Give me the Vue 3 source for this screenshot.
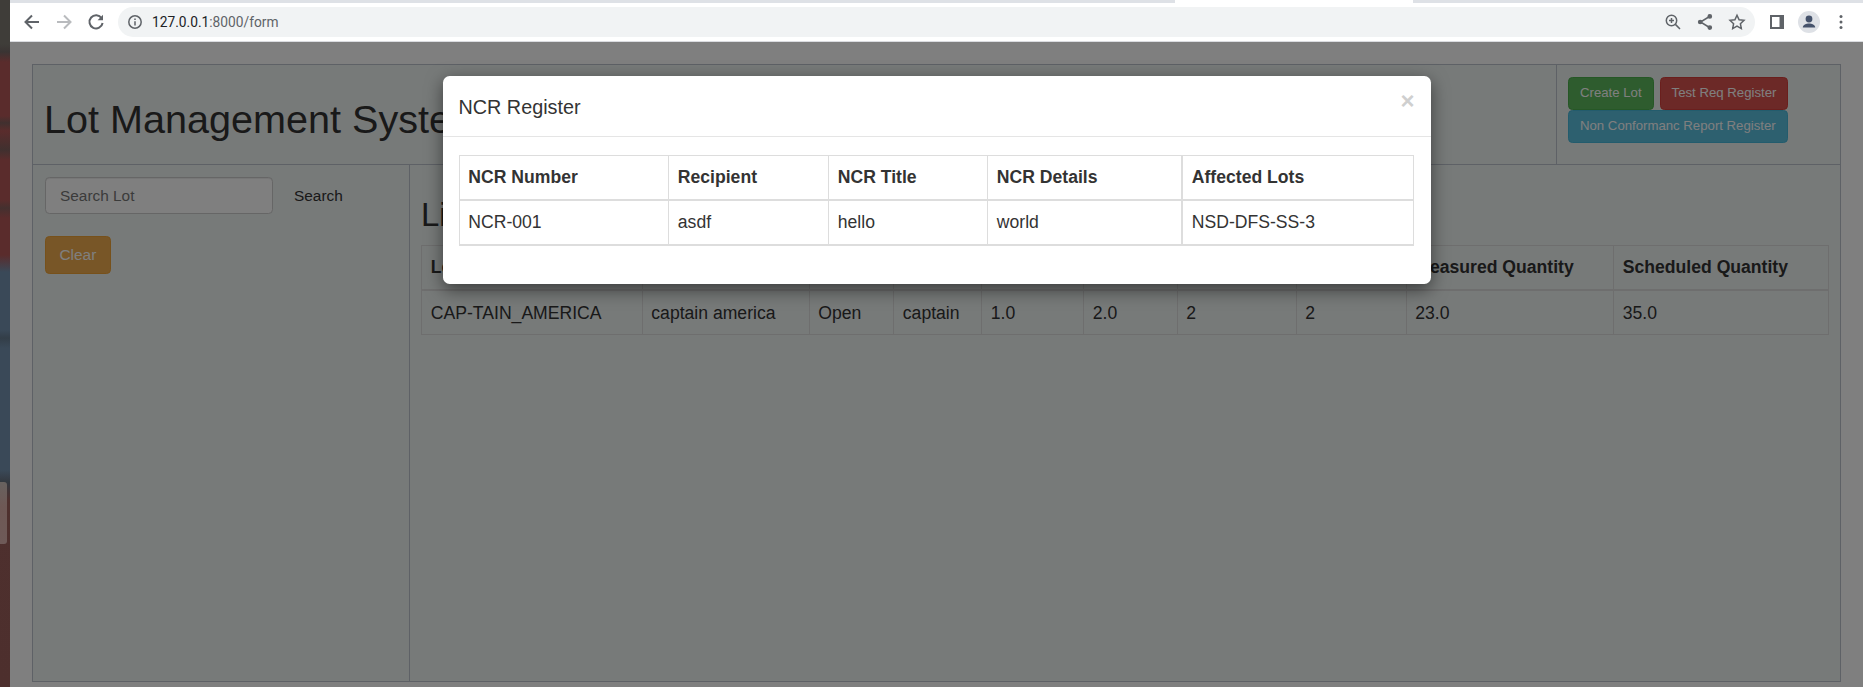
<script setup>
const lotColumns = [
  { label: 'Lot Number', value: 'CAP-TAIN_AMERICA', width: 220.5 },
  { label: 'Lot Title', value: 'captain america', width: 167 },
  { label: 'Status', value: 'Open', width: 84.5 },
  { label: 'Owner', value: 'captain', width: 88 },
  { label: 'Spec Min', value: '1.0', width: 102 },
  { label: 'Spec Max', value: '2.0', width: 93.5 },
  { label: 'Test Count', value: '2', width: 119 },
  { label: 'Reqs', value: '2', width: 110 },
  { label: 'Measured Quantity', value: '23.0', width: 207.5 },
  { label: 'Scheduled Quantity', value: '35.0', width: 215 }
]

const ncrColumns = [
  { label: 'NCR Number', value: 'NCR-001', width: 209.5 },
  { label: 'Recipient', value: 'asdf', width: 160 },
  { label: 'NCR Title', value: 'hello', width: 159 },
  { label: 'NCR Details', value: 'world', width: 194.5 },
  { label: 'Affected Lots', value: 'NSD-DFS-SS-3', width: 231 }
]
</script>

<template>
  <div class="screen">
    <div class="wallpaper">
      <div class="dock-tile"></div>
    </div>

    <div class="browser">
      <div class="tabstrip">
        <div class="active-tab"></div>
      </div>

      <div class="toolbar">
        <span class="tool first">
          <svg width="20" height="20" viewBox="0 0 20 20" fill="none" stroke="#5f6368" stroke-width="2">
            <path d="M17 10H4M10 3.5 3.5 10l6.5 6.5" />
          </svg>
        </span>
        <span class="tool">
          <svg width="20" height="20" viewBox="0 0 20 20" fill="none" stroke="#b9bbbe" stroke-width="2">
            <path d="M3 10h13M10 3.5l6.5 6.5-6.5 6.5" />
          </svg>
        </span>
        <span class="tool">
          <svg width="20" height="20" viewBox="0 0 20 20" fill="none" stroke="#5f6368" stroke-width="2">
            <path d="M15.6 6.2A6.6 6.6 0 1 0 16.6 11" />
            <path d="M17 2.8v5.4h-5.4z" fill="#5f6368" stroke="none" />
          </svg>
        </span>

        <div class="omnibox">
          <span class="tool">
            <svg width="16" height="16" viewBox="0 0 16 16" fill="none" stroke="#5f6368" stroke-width="1.5">
              <circle cx="8" cy="8" r="6.2" />
              <path d="M8 7.2v4.2M8 4.4v1.6" />
            </svg>
          </span>
          <span class="url"><span class="host">127.0.0.1</span>:8000/form</span>
          <span class="tool push">
            <svg width="18" height="18" viewBox="0 0 18 18" fill="none" stroke="#5f6368" stroke-width="1.5">
              <circle cx="7.5" cy="7.5" r="5.2" />
              <path d="M11.4 11.4 16 16M7.5 5v5M5 7.5h5" />
            </svg>
          </span>
          <span class="tool">
            <svg width="18" height="18" viewBox="0 0 18 18" fill="#5f6368" stroke="#5f6368" stroke-width="1.5">
              <path d="M13.5 3.5 4.5 9l9 5.5" fill="none" />
              <circle cx="13.8" cy="3.4" r="1.6" />
              <circle cx="4.2" cy="9" r="1.6" />
              <circle cx="13.8" cy="14.6" r="1.6" />
            </svg>
          </span>
          <span class="tool">
            <svg width="18" height="18" viewBox="0 0 18 18" fill="none" stroke="#5f6368" stroke-width="1.5">
              <path d="M9 2.2l2.1 4.5 4.9.6-3.6 3.4.9 4.9L9 13.2l-4.3 2.4.9-4.9L2 7.3l4.9-.6z" />
            </svg>
          </span>
        </div>

        <span class="tool">
          <svg width="16" height="16" viewBox="0 0 16 16">
            <path d="M1 1h14v14H1z" fill="#5f6368" />
            <path d="M3 3h7.5v10H3z" fill="#fff" />
          </svg>
        </span>
        <span class="tool">
          <svg width="22" height="22" viewBox="0 0 22 22">
            <circle cx="11" cy="11" r="11" fill="#dee1e6" />
            <circle cx="11" cy="8" r="3.4" fill="#45526b" />
            <path d="M4.8 16.5c0-2.8 3.6-4 6.2-4s6.2 1.2 6.2 4z" fill="#45526b" />
          </svg>
        </span>
        <span class="tool">
          <svg width="16" height="16" viewBox="0 0 16 16" fill="#5f6368">
            <circle cx="8" cy="2.5" r="1.5" />
            <circle cx="8" cy="8" r="1.5" />
            <circle cx="8" cy="13.5" r="1.5" />
          </svg>
        </span>
      </div>

      <div class="page">
        <div class="frame">
          <div class="top-row">
            <div class="title-cell">
              <h1>Lot Management System</h1>
            </div>
            <div class="action-cell">
              <button class="btn small success">Create Lot</button>
              <button class="btn small danger">Test Req Register</button>
              <button class="btn small info">Non Conformanc Report Register</button>
            </div>
          </div>

          <div class="bottom-row">
            <aside class="sidebar">
              <div class="search-row">
                <input class="search-input" placeholder="Search Lot" />
                <button class="btn link">Search</button>
              </div>
              <button class="btn warning">Clear</button>
            </aside>

            <main class="content">
              <h2>List of Lots</h2>
              <table class="lot-table">
                <thead>
                  <tr>
                    <th v-for="col in lotColumns" :key="col.label" :style="{ width: col.width + 'px' }">{{ col.label }}</th>
                  </tr>
                </thead>
                <tbody>
                  <tr>
                    <td v-for="col in lotColumns" :key="col.label">{{ col.value }}</td>
                  </tr>
                </tbody>
              </table>
            </main>
          </div>
        </div>

        <div class="backdrop"></div>

        <div class="modal-wrap">
          <div class="modal">
            <div class="modal-header">
              <span class="modal-title">NCR Register</span>
              <span class="close">×</span>
            </div>
            <div class="modal-body">
              <table class="ncr-table">
                <thead>
                  <tr>
                    <th v-for="col in ncrColumns" :key="col.label" :style="{ width: col.width + 'px' }">{{ col.label }}</th>
                  </tr>
                </thead>
                <tbody>
                  <tr>
                    <td v-for="col in ncrColumns" :key="col.label">{{ col.value }}</td>
                  </tr>
                </tbody>
              </table>
            </div>
          </div>
        </div>
      </div>
    </div>
  </div>
</template>

<style>
html,
body {
  margin: 0;
  overflow: hidden;
}
</style>

<style scoped>
.screen {
  display: flex;
  width: 1863px;
  height: 687px;
  overflow: hidden;
  font-family: "Liberation Sans", Arial, sans-serif;
  color: #333;
}

.wallpaper {
  position: relative;
  width: 10px;
  flex-shrink: 0;
  background: linear-gradient(
    180deg,
    #3f3d39 0,
    #3f3d39 44px,
    #3a3433 52px,
    #5a2c2c 62px,
    #5a2c2c 116px,
    #40302f 123px,
    #5a2c2c 131px,
    #40302f 150px,
    #5a2c2c 160px,
    #5a2c2c 200px,
    #44302f 208px,
    #5a2c2c 218px,
    #5a2c2c 255px,
    #3a4958 272px,
    #3a4958 330px,
    #333e48 338px,
    #3a4958 348px,
    #3a4958 470px,
    #33383f 482px,
    #4e302e 500px,
    #4d2f2d 687px
  );
}

.dock-tile {
  position: absolute;
  left: 0;
  top: 482px;
  width: 7px;
  height: 62px;
  border-radius: 0 3px 3px 0;
  background: linear-gradient(180deg, #68625f, #6e5855 40%, #6e5a58);
}

.browser {
  flex: 1;
  display: flex;
  flex-direction: column;
  min-width: 0;
}

.tabstrip {
  height: 3px;
  background: #dee1e6;
}

.active-tab {
  width: 238px;
  height: 3px;
  margin-left: 1165px;
  background: #fff;
}

.toolbar {
  display: flex;
  align-items: center;
  height: 39px;
  padding: 0 6px;
  box-sizing: border-box;
  background: #fff;
  border-bottom: 1px solid #dadce0;
}

.tool {
  display: flex;
  align-items: center;
  justify-content: center;
  width: 32px;
  height: 30px;
  flex-shrink: 0;
}

.omnibox {
  flex: 1;
  display: flex;
  align-items: center;
  height: 30px;
  margin: 0 6px;
  padding: 0 2px 0 1px;
  border-radius: 15px;
  background: #f1f3f4;
}

.url {
  margin-left: 1px;
  font-family: Roboto, "Liberation Sans", sans-serif;
  font-size: 13.75px;
  color: #5f6368;
}

.host {
  color: #202124;
}

.push {
  margin-left: auto;
}

.page {
  position: relative;
  flex: 1;
  padding: 22px 22px 5px;
  background: #fff;
  display: flex;
  flex-direction: column;
  min-height: 0;
}

.frame {
  flex: 1;
  display: flex;
  flex-direction: column;
  border: 1px solid #bcc3cc;
  background: #eef4f2;
  min-height: 0;
}

.top-row {
  display: flex;
  height: 99px;
  flex-shrink: 0;
  border-bottom: 1px solid #bcc3cc;
}

.title-cell {
  flex: 1;
  display: flex;
  align-items: center;
  padding: 10px 11px 0;
}

h1 {
  margin: 0;
  font-size: 39.6px;
  font-weight: 500;
  line-height: 1.1;
  white-space: nowrap;
}

.action-cell {
  width: 284px;
  box-sizing: border-box;
  padding: 12px 0 0 11px;
  border-left: 1px solid #bcc3cc;
}

.btn {
  display: inline-block;
  box-sizing: border-box;
  border: 1px solid transparent;
  border-radius: 4.4px;
  font-family: inherit;
  font-size: 15.4px;
  height: 37px;
  padding: 0 13px;
  color: #fff;
  white-space: nowrap;
  vertical-align: top;
}

.btn.small {
  font-size: 13.2px;
  height: 33px;
  padding: 0 11px 2px;
}

.success {
  background: #5cb85c;
  border-color: #4cae4c;
  margin-right: 6px;
}

.danger {
  background: #d9534f;
  border-color: #d43f3a;
}

.info {
  background: #5bc0de;
  border-color: #46b8da;
}

.warning {
  background: #f0ad4e;
  border-color: #eea236;
  margin-top: 22px;
  height: 38px;
  padding: 0 13.5px;
}

.link {
  background: transparent;
  color: #333;
}

.bottom-row {
  flex: 1;
  display: flex;
  min-height: 0;
}

.sidebar {
  width: 377px;
  box-sizing: border-box;
  padding: 12px;
  border-right: 1px solid #bcc3cc;
  flex-shrink: 0;
}

.search-row {
  display: flex;
  gap: 7px;
}

.search-input {
  width: 228px;
  height: 37px;
  box-sizing: border-box;
  padding: 0 14px;
  border: 1px solid #ccc;
  border-radius: 4.4px;
  background: #fff;
  font-family: inherit;
  font-size: 15.4px;
  color: #555;
  box-shadow: inset 0 1px 1px rgba(0, 0, 0, 0.075);
}

.search-input::placeholder {
  color: #777;
}

.content {
  flex: 1;
  padding: 32px 12px 0 11px;
  min-width: 0;
}

h2 {
  margin: 0 0 12px;
  font-size: 33px;
  font-weight: 500;
  line-height: 1.1;
  white-space: nowrap;
}

table {
  border-collapse: collapse;
  table-layout: fixed;
  font-size: 17.6px;
}

.lot-table {
  width: 1407px;
}

th,
td {
  box-sizing: border-box;
  padding: 8.8px;
  border: 1px solid #ddd;
  text-align: left;
  line-height: 25px;
  white-space: nowrap;
}

tbody td {
  line-height: 26px;
}

thead th {
  border-bottom-width: 2px;
}

.backdrop {
  position: absolute;
  inset: 0;
  background: rgba(0, 0, 0, 0.5);
}

.modal-wrap {
  position: absolute;
  inset: 0;
  display: flex;
  justify-content: center;
  padding-top: 34px;
}

.modal {
  width: 988px;
  height: 208px;
  box-sizing: border-box;
  border-radius: 6.6px;
  background: #fff;
  box-shadow: 0 5.5px 16.5px rgba(0, 0, 0, 0.5);
}

.modal-header {
  display: flex;
  justify-content: space-between;
  height: 61px;
  box-sizing: border-box;
  padding: 0 16px;
  border-bottom: 1px solid #e5e5e5;
}

.modal-title {
  margin-top: 18px;
  font-size: 19.8px;
  line-height: 27px;
}

.close {
  margin-top: 11px;
  font-size: 24px;
  font-weight: 700;
  line-height: 27px;
  color: #cfcfcf;
}

.modal-body {
  padding: 18px 16px 0;
}

.ncr-table {
  width: 954px;
}

.ncr-table th:last-child,
.ncr-table td:last-child {
  border-left-width: 2px;
}

.ncr-table tbody td {
  border-bottom-width: 2px;
}
</style>
